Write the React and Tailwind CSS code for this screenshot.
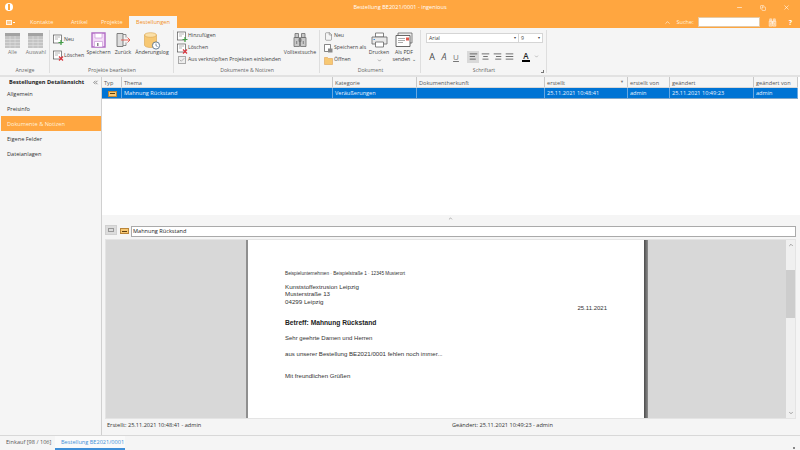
import React from 'react';
import { Minus, Copy, X, ChevronUp, ChevronDown, ChevronsLeft, AlignLeft, AlignCenter, AlignRight, AlignJustify, Check, File } from 'lucide-react';

const tabs = ['Kontakte', 'Artikel', 'Projekte'];
const navItems = ['Allgemein', 'Preisinfo', 'Dokumente & Notizen', 'Eigene Felder', 'Dateianlagen'];
const columns = [
  { label: 'Typ', cls: 'w-[20px]' },
  { label: 'Thema', cls: 'w-[211px]', value: 'Mahnung Rückstand' },
  { label: 'Kategorie', cls: 'w-[84px]', value: 'Veräußerungen' },
  { label: 'Dokumentherkunft', cls: 'w-[128px]', value: '' },
  { label: 'erstellt', cls: 'w-[83px]', value: '25.11.2021 10:48:41', sort: true },
  { label: 'erstellt von', cls: 'w-[42px]', value: 'admin' },
  { label: 'geändert', cls: 'w-[84px]', value: '25.11.2021 10:49:23' },
  { label: 'geändert von', cls: 'w-[44px]', value: 'admin' },
];

function TableIcon() {
  return (
    <svg width="15" height="15" viewBox="0 0 15 15" className="block">
      <rect width="15" height="15" fill="#c4c4c4" />
      <rect width="15" height="3" fill="#a3a3a3" />
      <path d="M0 6.5h15M0 9.5h15M0 12.5h15M5 3v12M10 3v12" stroke="#e2e2e2" strokeWidth="0.6" />
    </svg>
  );
}

function DocIcon({ children }) {
  return (
    <svg width="11" height="11" viewBox="0 0 11 11" className="block shrink-0">
      <rect x="0.5" y="1" width="8" height="8" fill="#fff" stroke="#555" strokeWidth="0.7" />
      <path d="M2 3h5M2 5h3" stroke="#888" strokeWidth="0.6" />
      {children}
    </svg>
  );
}

const plus = <path d="M8 6v5M5.5 8.5h5" stroke="#43a047" strokeWidth="1.2" />;
const cross = <path d="M6 6.5l4 4M10 6.5l-4 4" stroke="#d9363e" strokeWidth="1.2" />;

function BinocularIcon({ size, color, fill }) {
  return (
    <svg width={size} height={size} viewBox="0 0 16 16" className="block">
      <path d="M3 1.5h3.5v4H3zM9.5 1.5H13v4H9.5zM2 5.5h5.5v9H2zM8.5 5.5H14v9H8.5zM7 6.5h2v3H7z" fill={fill} stroke={color} strokeWidth="0.8" />
      <path d="M4.7 9v3M11.3 9v3" stroke={color} strokeWidth="0.8" />
    </svg>
  );
}

function MailIcon() {
  return (
    <span className="flex items-center justify-center w-[9px] h-[6px] bg-[#f7c873] border border-[#b9853a]">
      <span className="block w-[5px] h-px bg-[#5a3d10]" />
    </span>
  );
}

function BigButton({ label, children, w }) {
  return (
    <div className={`flex flex-col items-center ${w}`}>
      <div className="h-[16px] flex items-start justify-center">{children}</div>
      <span className="mt-[1px] whitespace-nowrap">{label}</span>
    </div>
  );
}

function RibbonGroup({ title, cls, children, launcher }) {
  return (
    <div className={`relative flex flex-col h-full pt-[2px] ${cls}`}>
      <div className="flex-1 min-h-0">{children}</div>
      <div className="h-[8px] mb-[1px] text-center text-[#666] leading-[8px] whitespace-nowrap">{title}</div>
      <span className="absolute right-0 top-[2px] bottom-[2px] w-px bg-[#dedede]" />
      {launcher && <span className="absolute right-[3px] bottom-[2px] w-[3px] h-[3px] border-r border-b border-[#777]" />}
    </div>
  );
}

export default function App() {
  return (
    <div className="w-[800px] h-[450px] overflow-hidden flex flex-col bg-[#f5f5f5] text-[#444] text-[5.6px] font-['Open_Sans','Liberation_Sans',sans-serif]">
      {/* Title bar */}
      <div className="h-[28px] bg-[#ffa640] flex flex-col shrink-0">
        <div className="h-[16px] relative flex items-center justify-center text-white">
          <span className="absolute left-[5px] top-[3px] w-[8px] h-[8px] rounded-full bg-white flex items-center justify-center">
            <span className="w-[1.5px] h-[6px] bg-[#ffa640]" />
          </span>
          <span className="-mt-[1px]">Bestellung BE2021/0001 - ingenious</span>
          <div className="absolute right-[10px] top-[4px] flex gap-[17px] items-center text-white">
            <Minus size={7} />
            <Copy size={6} />
            <X size={7} />
          </div>
        </div>
        <div className="flex-1 flex items-end relative">
          <div className="w-[26px] h-[12px] flex items-center pl-[6px] gap-[1px]">
            <span className="w-[6px] h-[5px] border border-white/80 bg-[#ffc98a]" />
            <span className="w-[2px] h-px bg-white" />
          </div>
          {tabs.map((t, i) => (
            <div key={t} className={`h-[12px] flex items-center text-[#fff2df] ${i === 0 ? 'w-[42px] pl-[4px]' : i === 1 ? 'w-[32px] pl-[3px]' : 'w-[29px] pl-[1px]'}`}>{t}</div>
          ))}
          <div className="h-[12px] w-[48px] bg-[#f5f5f5] flex items-center justify-center text-[#f28f1f]">Bestellungen</div>
          <div className="absolute right-[8px] bottom-[1px] flex items-center text-white">
            <ChevronUp size={7} className="mr-[5px]" />
            <span className="mr-[4px] text-[#fff2df]">Suche:</span>
            <span className="w-[62px] h-[10px] bg-white border border-[#e5c9a5] mr-[8px]" />
            <BinocularIcon size={9} color="#fff" fill="#ffc98a" />
            <span className="ml-[12px] text-[7px] font-bold leading-none">?</span>
          </div>
        </div>
      </div>

      {/* Ribbon */}
      <div className="h-[49px] shrink-0 flex bg-[#f5f5f5] border-b-[2px] border-[#e2e2e2] text-[5.2px]">
        <RibbonGroup title="Anzeige" cls="w-[50px]">
          <div className="flex justify-between px-[5px] pt-[3px] text-[#777]">
            <div className="flex flex-col items-center gap-[1px]"><TableIcon /><span>Alle</span></div>
            <div className="flex flex-col items-center gap-[1px] mr-[1px]"><TableIcon /><span className="-mx-[2px]">Auswahl</span></div>
          </div>
        </RibbonGroup>
        <RibbonGroup title="Projekte bearbeiten" cls="w-[124px]">
          <div className="flex pl-[3px] pt-[2px]">
            <div className="w-[33px] flex flex-col gap-[5px] pt-[2px]">
              <div className="flex items-center h-[11px]"><DocIcon>{plus}</DocIcon>Neu</div>
              <div className="flex items-center h-[11px]"><DocIcon>{cross}</DocIcon>Löschen</div>
            </div>
            <BigButton label="Speichern" w="w-[25px]">
              <svg width="15" height="16" viewBox="0 0 15 16" className="block">
                <path d="M1 1h13v14H1z" fill="#f4dcf7" stroke="#b06cc4" strokeWidth="1.4" />
                <path d="M4 1.5h7v4.5H4z" fill="#fff" stroke="#c58fd4" strokeWidth="0.6" />
                <path d="M3.5 9.5h8v5.5h-8z" fill="#fff" stroke="#c58fd4" strokeWidth="0.6" />
                <path d="M6 11h1.5v3H6z" fill="#888" />
              </svg>
            </BigButton>
            <BigButton label="Zurück" w="w-[24px]">
              <svg width="15" height="16" viewBox="0 0 15 16" className="block">
                <path d="M1 1.5h6v13H1z" fill="#ddd" stroke="#666" strokeWidth="0.8" />
                <path d="M7 2.5h3v3M7 13.5h3v-3" fill="none" stroke="#777" strokeWidth="0.8" />
                <path d="M5 8h9M11.5 5.5L14 8l-2.5 2.5" fill="none" stroke="#e2574c" strokeWidth="0.9" />
              </svg>
            </BigButton>
            <BigButton label="Änderungslog" w="w-[34px]">
              <svg width="18" height="18" viewBox="0 0 17 18" className="block">
                <path d="M1 3v10c0 1.5 2.7 2.5 6 2.5s6-1 6-2.5V3z" fill="#f7c873" stroke="#d8a24e" strokeWidth="0.6" />
                <ellipse cx="7" cy="3" rx="6" ry="2.3" fill="#fbe0a8" stroke="#d8a24e" strokeWidth="0.6" />
                <circle cx="12.5" cy="13.5" r="3.6" fill="#fff" stroke="#44627e" strokeWidth="0.8" />
                <path d="M12.5 11.5v2.2l1.5.8" fill="none" stroke="#44627e" strokeWidth="0.7" />
              </svg>
            </BigButton>
          </div>
        </RibbonGroup>
        <RibbonGroup title="Dokumente & Notizen" cls="w-[146px]">
          <div className="flex pl-[3px] pt-[1px]">
            <div className="w-[106px] shrink-0 flex flex-col gap-[2px]">
              <div className="flex items-center h-[10px]"><DocIcon>{plus}</DocIcon>Hinzufügen</div>
              <div className="flex items-center h-[10px]"><DocIcon>{cross}</DocIcon>Löschen</div>
              <div className="flex items-center h-[10px] whitespace-nowrap">
                <span className="w-[8px] h-[8px] shrink-0 mx-[1px] mr-[2px] border border-[#aaa] bg-[#eee] flex items-center justify-center"><Check size={6} className="text-[#777]" /></span>
                Aus verknüpften Projekten einblenden
              </div>
            </div>
            <div className="pt-[1px]">
              <BigButton label="Volltextsuche" w="w-[34px]">
                <BinocularIcon size={16} color="#6f6f6f" fill="#c8c8c8" />
              </BigButton>
            </div>
          </div>
        </RibbonGroup>
        <RibbonGroup title="Dokument" cls="w-[101px]">
          <div className="flex pl-[4px] pt-[1px]">
            <div className="w-[45px] shrink-0 flex flex-col gap-[2px] whitespace-nowrap">
              <div className="flex items-center gap-[1px] h-[10px]"><File size={9} strokeWidth={1.2} className="text-[#555]" />Neu</div>
              <div className="flex items-center gap-[1px] h-[10px]">
                <svg width="9" height="9" viewBox="0 0 9 9"><path d="M.5.5h6v7h-6z" fill="#fff" stroke="#555" strokeWidth="0.7" /><path d="M4 4.5h4.5v4H4z" fill="#888" /></svg>
                Speichern als
              </div>
              <div className="flex items-center gap-[1px] h-[10px]">
                <svg width="9" height="9" viewBox="0 0 9 9"><path d="M.5 1.5h3l1 1h4v6h-8z" fill="#f7c873" stroke="#e0a255" strokeWidth="0.6" /></svg>
                Öffnen
              </div>
            </div>
            <div className="w-[20px] flex flex-col items-center">
              <svg width="17" height="16" viewBox="0 0 17 16" className="block mt-[1px]">
                <path d="M4.5 1h8v4h-8z" fill="#fff" stroke="#666" strokeWidth="0.8" />
                <path d="M1 5h15v7H1z" fill="#e8e8e8" stroke="#666" strokeWidth="0.8" />
                <path d="M4.5 10h8v5h-8z" fill="#fff" stroke="#666" strokeWidth="0.8" />
                <rect x="2.5" y="7" width="1.5" height="1" fill="#3f8fd8" />
              </svg>
              <span className="mt-[1px]">Drucken</span>
              <ChevronDown size={5} className="mt-[1px]" />
            </div>
            <div className="w-[30px] flex flex-col items-center">
              <svg width="18" height="16" viewBox="0 0 18 16" className="block mt-[1px]">
                <path d="M3 1h14v10H3z" fill="#eee" stroke="#555" strokeWidth="0.7" />
                <path d="M1 3.5h14v11H1z" fill="#fff" stroke="#444" strokeWidth="0.8" />
                <path d="M3 6.5h7M3 8.5h7M3 10.5h5" stroke="#888" strokeWidth="0.7" />
                <rect x="11" y="5.5" width="3" height="3" fill="#e2574c" />
              </svg>
              <span className="mt-[1px] text-center leading-[7px] whitespace-nowrap">Als PDF<br />senden ⌄</span>
            </div>
          </div>
        </RibbonGroup>
        <RibbonGroup title="Schriftart" cls="w-[126px]" launcher>
          <div className="pl-[5px] pr-[4px] pt-[3px]">
            <div className="flex h-[10px] bg-white border border-[#d5d5d5]">
              <span className="flex-1 pl-[2px] leading-[8px] border-r border-[#d5d5d5] relative">Arial<span className="absolute right-[2px] top-0 text-[4px]">▾</span></span>
              <span className="w-[23px] pl-[2px] leading-[8px] relative">9<span className="absolute right-[2px] top-0 text-[4px]">▾</span></span>
            </div>
            <div className="flex items-center mt-[7px] h-[13px] text-[#444]">
              <span className="w-[12px] text-center text-[9px] leading-none">A</span>
              <span className="w-[12px] text-center text-[9px] italic leading-none text-[#555]">A</span>
              <span className="w-[12px] text-center text-[8px] underline leading-none text-[#777]">U</span>
              <span className="ml-[5px] w-[12px] h-[12px] bg-[#d9d9d9] flex items-center justify-center"><AlignLeft size={9} /></span>
              <span className="w-[12px] flex justify-center"><AlignCenter size={9} /></span>
              <span className="w-[12px] flex justify-center"><AlignRight size={9} /></span>
              <span className="w-[12px] flex justify-center"><AlignJustify size={9} /></span>
              <span className="w-[14px] ml-[4px] flex flex-col items-center text-[8px] leading-[8px] font-semibold text-[#222]">A<span className="w-[8px] h-[2px] bg-black" /></span>
              <ChevronDown size={5} className="text-[#777] ml-[1px]" />
            </div>
          </div>
        </RibbonGroup>
      </div>

      {/* Main */}
      <div className="flex-1 min-h-0 flex">
        {/* Side navigation */}
        <div className="w-[102px] shrink-0 border-r border-[#d0d0d0] pl-px">
          <div className="h-[9px] pt-[2px] flex items-center justify-between font-bold text-[#222] pl-[8px] pr-[2px]">
            Bestellungen Detailansicht
            <ChevronsLeft size={7} className="text-[#444]" />
          </div>
          {navItems.map((item) => (
            <div key={item} className={`h-[15px] pt-[1px] flex items-center pl-[6px] ${item === 'Dokumente & Notizen' ? 'bg-[#ffa640] text-[#fff2df]' : 'text-[#333]'}`}>{item}</div>
          ))}
        </div>

        <div className="flex-1 min-w-0 flex flex-col">
          {/* Grid */}
          <div className="h-[138px] shrink-0 bg-white">
            <div className="h-[11px] w-[696px] flex bg-[#f5f5f5] border-b border-[#d8d8d8]">
              {columns.map((c) => (
                <div key={c.label} className={`${c.cls} shrink-0 relative pl-[2px] pt-[1px] leading-[10px] border-r border-[#c8c8c8] text-[#555]`}>
                  {c.label}
                  {c.sort && <span className="absolute right-[3px] top-0 text-[4px] text-[#777]">▼</span>}
                </div>
              ))}
            </div>
            <div className="h-[11px] w-[696px] flex bg-[#0074d4] text-[#e8f3ff] border-b border-[#7fa6c9]">
              {columns.map((c) => (
                <div key={c.label} className={`${c.cls} shrink-0 pl-[2px] pt-[1px] leading-[9px] border-r border-[#6aa8e0] flex items-center`}>
                  {c.value === undefined ? <span className="ml-[4px]"><MailIcon /></span> : c.value}
                </div>
              ))}
            </div>
          </div>

          {/* Splitter */}
          <div className="h-[7px] shrink-0 flex items-center justify-center pr-[2px]">
            <ChevronUp size={5} className="text-[#555]" />
          </div>

          {/* Detail toolbar */}
          <div className="h-[15px] shrink-0 flex items-end pl-[3px] pr-[4px]">
            <span className="w-[12px] h-[10px] mb-[2px] bg-[#dcdcdc] border border-[#d0d0d0] flex items-center justify-center">
              <span className="w-[6px] h-[4px] border border-[#999]" />
            </span>
            <span className="ml-[3px] mr-[2px] mb-[3px]"><MailIcon /></span>
            <div className="flex-1 h-[11px] bg-white border border-[#aaa] pl-[1px] leading-[9px] text-[#222]">Mahnung Rückstand</div>
          </div>

          {/* Document viewer */}
          <div className="h-[180px] shrink-0 mt-[2px] ml-[3px] mr-[4px] flex bg-[#d8d8d8] border border-[#e4e4e4]">
            <div className="w-[142px] shrink-0 border-r-[2px] border-[#8f8f8f]" />
            <div className="w-[396px] shrink-0 bg-white pl-[37px] pr-[37px] pt-[31px] font-['Liberation_Sans',sans-serif] text-[#333] overflow-hidden">
              <div className="text-[4.7px] leading-[6px]">Beispielunternehmen · Beispielstraße 1 · 12345 Musterort</div>
              <div className="mt-[6px] text-[6.2px] leading-[7.4px]">
                <div>Kunststoffextrusion Leipzig</div>
                <div>Musterstraße 13</div>
                <div>04299 Leipzig</div>
              </div>
              <div className="-mt-[1px] text-right text-[6px] leading-[8px]">25.11.2021</div>
              <div className="mt-[7px] text-[6.7px] leading-[8px] font-bold text-[#222]">Betreff: Mahnung Rückstand</div>
              <div className="mt-[6.6px] text-[6px] leading-[8px]">Sehr geehrte Damen und Herren</div>
              <div className="mt-[7.7px] text-[6.1px] leading-[8px]">aus unserer Bestellung BE2021/0001 fehlen noch immer...</div>
              <div className="mt-[14px] text-[6.1px] leading-[8px]">Mit freundlichen Grüßen</div>
            </div>
            <div className="w-[4px] shrink-0 bg-gradient-to-r from-[#4d4d4d] to-[#8f8f8f]" />
            <div className="flex-1" />
            <div className="w-[9px] shrink-0 bg-[#f0f0f0] flex flex-col items-center text-[#555]">
              <ChevronUp size={6} className="mt-[2px]" />
              <span className="w-full h-[48px] bg-[#cdcdcd] mt-[22px]" />
              <ChevronDown size={6} className="mt-auto mb-[2px]" />
            </div>
          </div>

          {/* Status line */}
          <div className="flex-1 flex items-center pl-[5px] text-[#333] pb-[4px]">
            <span className="w-[345px]">Erstellt: 25.11.2021 10:48:41 - admin</span>
            <span>Geändert: 25.11.2021 10:49:23 - admin</span>
          </div>
        </div>
      </div>

      {/* Bottom tabs */}
      <div className="h-[15px] shrink-0 flex border-t border-[#d8d8d8] relative">
        <span className="w-[55px] pl-[6px] leading-[12px] text-[#555]">Einkauf [98 / 106]</span>
        <span className="w-[70px] pl-[6px] leading-[12px] text-[#3f8fd8] bg-[#fafafa] border-b-[2px] border-[#3f8fd8]">Bestellung BE2021/0001</span>
        <span className="absolute right-[5px] bottom-[1px] w-[2px] h-[2px] bg-[#888]" />
      </div>
    </div>
  );
}
